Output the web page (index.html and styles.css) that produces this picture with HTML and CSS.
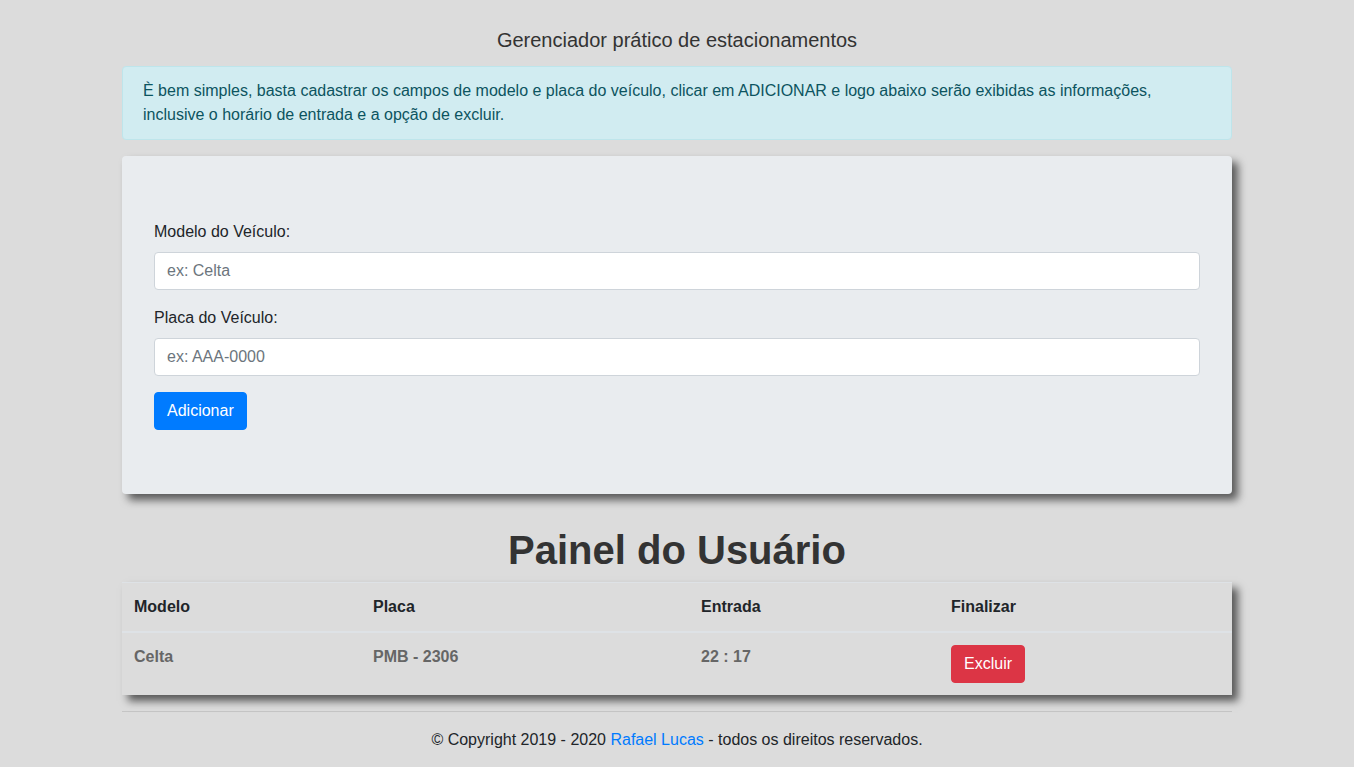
FILE: index.html
```html
<!DOCTYPE html>
<html lang="pt-br">
<head>
<meta charset="utf-8">
<title>Estacionamento</title>
<link rel="stylesheet" href="styles.css">
</head>
<body>
<div class="container">
  <h5 class="title">Gerenciador prático de estacionamentos</h5>
  <div class="alert">È bem simples, basta cadastrar os campos de modelo e placa do veículo, clicar em ADICIONAR e logo abaixo serão exibidas as informações, inclusive o horário de entrada e a opção de excluir.</div>
  <form class="jumbotron">
    <div class="form-group">
      <label for="modelo">Modelo do Veículo:</label>
      <input id="modelo" class="form-control" type="text" placeholder="ex: Celta">
    </div>
    <div class="form-group">
      <label for="placa">Placa do Veículo:</label>
      <input id="placa" class="form-control" type="text" placeholder="ex: AAA-0000">
    </div>
    <button type="button" class="btn btn-primary">Adicionar</button>
  </form>
  <h1 class="panel-title">Painel do Usuário</h1>
  <table class="table">
    <colgroup>
      <col class="c1"><col class="c2"><col class="c3"><col class="c4">
    </colgroup>
    <thead>
      <tr><th>Modelo</th><th>Placa</th><th>Entrada</th><th>Finalizar</th></tr>
    </thead>
    <tbody>
      <tr><td>Celta</td><td>PMB - 2306</td><td>22 : 17</td><td><button type="button" class="btn btn-danger">Excluir</button></td></tr>
    </tbody>
  </table>
  <hr class="rule">
  <p class="footer">© Copyright 2019 - 2020 <a href="#">Rafael Lucas</a> - todos os direitos reservados.</p>
</div>
</body>
</html>
```
FILE: styles.css
```css
* { box-sizing: border-box; }
html, body { margin: 0; }
body {
  background: #dcdcdc;
  font-family: "Liberation Sans", Arial, Helvetica, sans-serif;
  font-size: 16px;
  line-height: 1.5;
  color: #212529;
}
.container {
  width: 1110px;
  margin: 0 auto;
}
.title {
  margin: 0;
  padding-top: 28px;
  padding-bottom: 14px;
  font-size: 20px;
  font-weight: 400;
  line-height: 24px;
  text-align: center;
  color: #333;
}
.alert {
  padding: 12px 20px;
  margin-bottom: 16px;
  border: 1px solid #bee5eb;
  border-radius: 4px;
  background: #d1ecf1;
  color: #0c5460;
}
.jumbotron {
  display: block;
  padding: 64px 32px;
  margin: 0 0 32px;
  background: #e9ecef;
  border-radius: 4px;
  box-shadow: 6px 6px 8px rgba(0, 0, 0, 0.6);
}
.form-group { margin-bottom: 16px; }
.form-group label {
  display: block;
  margin-bottom: 8px;
}
.form-control {
  display: block;
  width: 100%;
  height: 38px;
  padding: 6px 12px;
  font-family: inherit;
  font-size: 16px;
  line-height: 1.5;
  color: #495057;
  background: #fff;
  border: 1px solid #ced4da;
  border-radius: 4px;
}
.form-control::placeholder { color: #6c757d; opacity: 1; }
.btn {
  display: inline-block;
  height: 38px;
  padding: 6px 12px;
  font-family: inherit;
  font-size: 16px;
  line-height: 1.5;
  border: 1px solid transparent;
  border-radius: 4px;
  color: #fff;
  cursor: pointer;
}
.btn-primary { background: #007bff; border-color: #007bff; }
.btn-danger { background: #dc3545; border-color: #dc3545; }
.panel-title {
  margin: 1px 0 8px;
  font-size: 40px;
  line-height: 48px;
  font-weight: 700;
  text-align: center;
  color: #333;
}
.table {
  width: 100%;
  margin-bottom: 16px;
  border-collapse: collapse;
  table-layout: fixed;
  box-shadow: 6px 6px 8px rgba(0, 0, 0, 0.6);
}
.c1 { width: 239px; }
.c2 { width: 328px; }
.c3 { width: 250px; }
.c4 { width: 293px; }
.table th, .table td {
  padding: 12px;
  text-align: left;
  vertical-align: top;
  border-top: 1px solid #dee2e6;
}
.table thead th {
  border-bottom: 2px solid #dee2e6;
  vertical-align: bottom;
}
.table th { font-weight: 700; color: #212529; }
.table td { font-weight: 700; color: #666; }
.rule {
  margin: 0 0 16px;
  border: 0;
  border-top: 1px solid rgba(0, 0, 0, 0.1);
}
.footer {
  margin: 0;
  text-align: center;
  color: #212529;
}
.footer a { color: #007bff; text-decoration: none; }
```
